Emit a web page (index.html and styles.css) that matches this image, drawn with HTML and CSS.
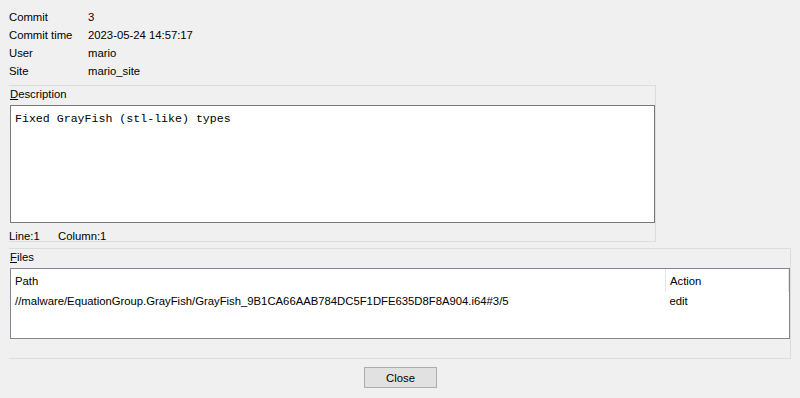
FILE: index.html
```html
<!DOCTYPE html>
<html lang="en">
<head>
    <meta charset="UTF-8">
    <title>Commit 3</title>
    <link rel="stylesheet" href="styles.css">
</head>
<body>
    <div class="dialog">
        <div class="info">
            <span>Commit</span><span>3</span>
            <span>Commit time</span><span>2023-05-24 14:57:17</span>
            <span>User</span><span>mario</span>
            <span>Site</span><span>mario_site</span>
        </div>

        <div class="group desc-group">
            <div class="group-title"><u>D</u>escription</div>
            <div class="textbox">Fixed GrayFish (stl-like) types</div>
            <div class="status">
                <span class="status-line">Line:1</span>
                <span>Column:1</span>
            </div>
        </div>

        <div class="group files-group">
            <div class="group-title"><u>F</u>iles</div>
            <div class="list">
                <table class="files">
                    <thead>
                        <tr>
                            <th class="col-path">Path</th>
                            <th class="col-action">Action</th>
                        </tr>
                    </thead>
                    <tbody>
                        <tr>
                            <td>//malware/EquationGroup.GrayFish/GrayFish_9B1CA66AAB784DC5F1DFE635D8F8A904.i64#3/5</td>
                            <td>edit</td>
                        </tr>
                    </tbody>
                </table>
            </div>
            <div class="files-footer"></div>
        </div>

        <div class="buttons">
            <button class="btn">Close</button>
        </div>
    </div>
</body>
</html>
```

FILE: styles.css
```css
body {
    margin: 0;
    background-color: #f0f0f0;
    font-family: "Liberation Sans", Arial, sans-serif;
    font-size: 11.3px;
    color: #000;
}
.dialog {
    display: flex;
    flex-direction: column;
    padding: 8px 9px 0 9px;
    height: 398px;
    box-sizing: border-box;
}
.info {
    display: grid;
    grid-template-columns: 79px auto;
    grid-auto-rows: 18px;
    align-items: center;
    margin-bottom: 5px;
}
.group {
    border: 1px solid #dcdcdc;
    border-left-width: 0;
}
.desc-group {
    width: 646px;
}
.files-group {
    width: 781px;
    margin-top: 6px;
}
.group-title {
    height: 19px;
    line-height: 16px;
    padding-left: 1px;
}
.textbox {
    margin-left: 1px;
    border: 1px solid #7a7a7a;
    background-color: #fff;
    padding: 5px 4px;
    box-sizing: border-box;
    height: 118px;
    font-family: "Liberation Mono", "DejaVu Sans Mono", monospace;
    font-size: 11.6px;
    line-height: 15px;
}
.status {
    height: 18px;
    line-height: 26px;
    display: flex;
}
.status-line {
    width: 49px;
}
.list {
    margin-left: 1px;
    height: 71px;
    border: 1px solid #828790;
    background-color: #fff;
    box-sizing: border-box;
}
.files {
    border-collapse: collapse;
    width: 778px;
    font-size: 11.3px;
}
.files th {
    font-weight: normal;
    text-align: left;
    height: 23px;
    padding: 0 4px 0 4px;
    border-right: 1px solid #e5e5e5;
}
.files td {
    height: 17px;
    padding: 0 4px;
}
.col-path {
    width: 646px;
}
.files-footer {
    height: 19px;
}
.buttons {
    display: flex;
    justify-content: center;
    margin-top: 8px;
}
.btn {
    width: 73px;
    height: 21px;
    margin-left: 1px;
    background-color: #e1e1e1;
    border: 1px solid #adadad;
    font-family: "Liberation Sans", Arial, sans-serif;
    font-size: 11.3px;
    color: #000;
    padding: 0;
}
```
